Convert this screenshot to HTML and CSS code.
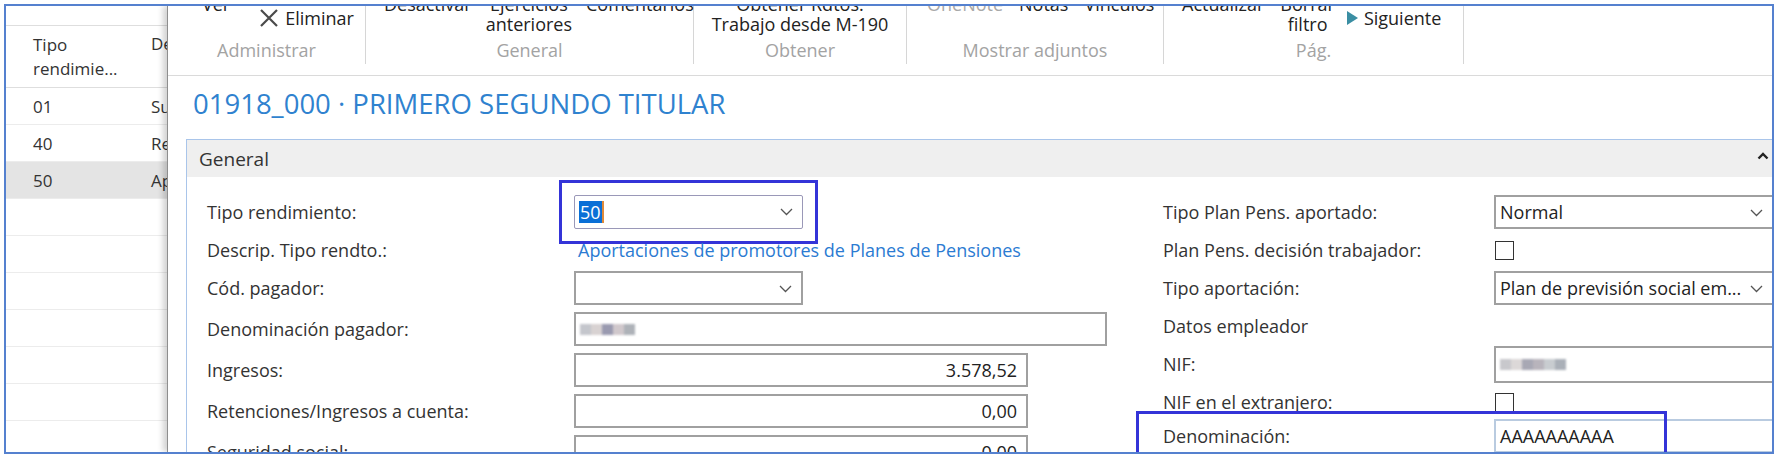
FILE: index.html
```html
<!DOCTYPE html>
<html lang="es">
<head>
    <meta charset="UTF-8">
    <title>01918_000 · PRIMERO SEGUNDO TITULAR</title>
    <link rel="stylesheet" href="styles.css">
</head>
<body>
    <div class="frame">
        <div class="list-panel">
            <div class="list-top"></div>
            <div class="list-head">
                <div class="col-a">Tipo<br>rendimie...</div>
                <div class="col-b">De</div>
            </div>
            <div class="list-row"><div class="col-a">01</div><div class="col-b">Su</div></div>
            <div class="list-row"><div class="col-a">40</div><div class="col-b">Re</div></div>
            <div class="list-row selected"><div class="col-a">50</div><div class="col-b">Ap</div></div>
            <div class="list-row"></div>
            <div class="list-row"></div>
            <div class="list-row"></div>
            <div class="list-row"></div>
            <div class="list-row"></div>
            <div class="list-row"></div>
        </div>

        <div class="dialog">
            <div class="ribbon">
                <div class="group g1">
                    <div class="btns">
                        <div class="item big"><span>Ver</span></div>
                        <div class="item small">
                            <span class="ico">
                                <svg width="22" height="20" viewBox="0 0 22 20"><path d="M3 2 L19 18 M19 2 L3 18" stroke="#4a4a4a" stroke-width="2.2" fill="none"/></svg>
                            </span>
                            <span>Eliminar</span>
                        </div>
                    </div>
                    <div class="glabel">Administrar</div>
                </div>
                <div class="group g2">
                    <div class="btns">
                        <div class="item big"><span>Desactivar</span></div>
                        <div class="item big"><span>Ejercicios</span><span>anteriores</span></div>
                        <div class="item big"><span>Comentarios</span></div>
                    </div>
                    <div class="glabel">General</div>
                </div>
                <div class="group g3">
                    <div class="btns">
                        <div class="item big"><span>Obtener Rdtos.</span><span>Trabajo desde M-190</span></div>
                    </div>
                    <div class="glabel">Obtener</div>
                </div>
                <div class="group g4">
                    <div class="btns">
                        <div class="item big muted"><span>OneNote</span></div>
                        <div class="item big"><span>Notas</span></div>
                        <div class="item big"><span>Vínculos</span></div>
                    </div>
                    <div class="glabel">Mostrar adjuntos</div>
                </div>
                <div class="group g5">
                    <div class="btns">
                        <div class="item big"><span>Actualizar</span></div>
                        <div class="item big"><span>Borrar</span><span>filtro</span></div>
                        <div class="item small">
                            <span class="ico">
                                <svg width="14" height="16" viewBox="0 0 14 16"><polygon points="2,1 13,8 2,15" fill="#3a8ea3"/></svg>
                            </span>
                            <span>Siguiente</span>
                        </div>
                    </div>
                    <div class="glabel">Pág.</div>
                </div>
            </div>

            <h1 class="title">01918_000 · PRIMERO SEGUNDO TITULAR</h1>

            <div class="section">
                <div class="section-head">
                    <span>General</span>
                    <svg class="caret" width="12" height="8" viewBox="0 0 12 8"><polyline points="1.5,6.5 6,2 10.5,6.5" stroke="#222" stroke-width="2.4" fill="none"/></svg>
                </div>
                <div class="section-body">
                    <div class="col left">
                        <div class="row">
                            <div class="label">Tipo rendimiento:</div>
                            <div class="field">
                                <div class="input select narrow focus"><span class="sel">50</span><span class="cursor"></span>
                                    <svg class="chev" width="13" height="8" viewBox="0 0 13 8"><polyline points="1,1 6.5,6.5 12,1" stroke="#555" stroke-width="1.3" fill="none"/></svg>
                                </div>
                                <div class="mark mark-a"></div>
                            </div>
                        </div>
                        <div class="row short">
                            <div class="label">Descrip. Tipo rendto.:</div>
                            <div class="field"><span class="link">Aportaciones de promotores de Planes de Pensiones</span></div>
                        </div>
                        <div class="row">
                            <div class="label">Cód. pagador:</div>
                            <div class="field">
                                <div class="input select narrow">
                                    <svg class="chev" width="13" height="8" viewBox="0 0 13 8"><polyline points="1,1 6.5,6.5 12,1" stroke="#555" stroke-width="1.3" fill="none"/></svg>
                                </div>
                            </div>
                        </div>
                        <div class="row">
                            <div class="label">Denominación pagador:</div>
                            <div class="field">
                                <div class="input wide">
                                    <span class="blur"><i style="background:#c4c6cc"></i><i style="background:#d8d2d2"></i><i style="background:#9a9ab0"></i><i style="background:#d0c8cc"></i><i style="background:#aeb2b8"></i></span>
                                </div>
                            </div>
                        </div>
                        <div class="row">
                            <div class="label">Ingresos:</div>
                            <div class="field"><div class="input num">3.578,52</div></div>
                        </div>
                        <div class="row">
                            <div class="label">Retenciones/Ingresos a cuenta:</div>
                            <div class="field"><div class="input num">0,00</div></div>
                        </div>
                        <div class="row">
                            <div class="label">Seguridad social:</div>
                            <div class="field"><div class="input num">0,00</div></div>
                        </div>
                    </div>

                    <div class="col right">
                        <div class="row">
                            <div class="label">Tipo Plan Pens. aportado:</div>
                            <div class="field">
                                <div class="input select side">Normal
                                    <svg class="chev" width="13" height="8" viewBox="0 0 13 8"><polyline points="1,1 6.5,6.5 12,1" stroke="#555" stroke-width="1.3" fill="none"/></svg>
                                </div>
                            </div>
                        </div>
                        <div class="row short">
                            <div class="label">Plan Pens. decisión trabajador:</div>
                            <div class="field"><div class="check"></div></div>
                        </div>
                        <div class="row">
                            <div class="label">Tipo aportación:</div>
                            <div class="field">
                                <div class="input select side">Plan de previsión social em...
                                    <svg class="chev" width="13" height="8" viewBox="0 0 13 8"><polyline points="1,1 6.5,6.5 12,1" stroke="#555" stroke-width="1.3" fill="none"/></svg>
                                </div>
                            </div>
                        </div>
                        <div class="row short">
                            <div class="label">Datos empleador</div>
                        </div>
                        <div class="row">
                            <div class="label">NIF:</div>
                            <div class="field">
                                <div class="input side tall">
                                    <span class="blur"><i style="background:#c8c8cc"></i><i style="background:#dcd8d8"></i><i style="background:#a8a8b4"></i><i style="background:#b8b4bc"></i><i style="background:#c8ccd0"></i><i style="background:#aab0b8"></i></span>
                                </div>
                            </div>
                        </div>
                        <div class="row short">
                            <div class="label">NIF en el extranjero:</div>
                            <div class="field"><div class="check"></div></div>
                        </div>
                        <div class="row last">
                            <div class="label">Denominación:</div>
                            <div class="field"><div class="input side soft">AAAAAAAAAA</div></div>
                            <div class="mark mark-b"></div>
                        </div>
                    </div>
                </div>
            </div>
        </div>
    </div>
</body>
</html>
```

FILE: styles.css
```css
body {
    margin: 0;
    background: #ffffff;
    font-family: 'Open Sans', 'Noto Sans', sans-serif;
    color: #2b2b2b;
}

.frame {
    box-sizing: border-box;
    width: 1770px;
    height: 450px;
    margin: 4px 0 0 4px;
    border: 2px solid #5581cf;
    overflow: hidden;
    display: flex;
    background: #ffffff;
}

/* list behind the dialog */
.list-panel {
    width: 161px;
    flex: none;
    font-size: 17px;
    color: #333;
}

.list-top {
    height: 19px;
    border-bottom: 1px solid #dedede;
}

.list-head {
    display: flex;
    height: 61px;
    align-items: center;
    border-bottom: 1px solid #dedede;
    line-height: 24px;
}

.list-head .col-b {
    align-self: flex-start;
    margin-top: 6px;
}

.col-a {
    width: 118px;
    padding-left: 27px;
    flex: none;
}

.col-b {
    white-space: nowrap;
}

.list-row {
    display: flex;
    align-items: center;
    height: 36px;
    border-bottom: 1px solid #ececec;
}

.list-row.selected {
    background: #e4e4e4;
}

/* dialog */
.dialog {
    flex: 1;
    min-width: 0;
    border-left: 1px solid #8e8e8e;
    box-shadow: -4px 0 6px rgba(0, 0, 0, 0.18);
    background: #ffffff;
    position: relative;
}

.ribbon {
    display: flex;
    height: 69px;
    border-bottom: 1px solid #dadada;
    font-size: 18px;
}

.group {
    height: 58px;
    display: flex;
    flex-direction: column;
    border-right: 1px solid #d6d6d6;
    box-sizing: border-box;
}

.g1 { width: 198px; }
.g2 { width: 328px; }
.g3 { width: 213px; }
.g4 { width: 257px; }
.g5 { width: 300px; }

.btns {
    height: 34px;
    display: flex;
    align-items: flex-start;
    gap: 14px;
    padding-left: 18px;
}

.g1 .btns { padding-left: 34px; gap: 28px; }
.g3 .btns { justify-content: center; padding-left: 0; }
.g4 .btns { padding-left: 20px; gap: 16px; }
.g5 .btns { gap: 16px; }
.g5 .item.small { margin-left: -6px; }

.item {
    display: flex;
    flex-direction: column;
    align-items: center;
    line-height: 20px;
    white-space: nowrap;
    color: #222;
}

.item.big {
    margin-top: -12px;
}

.item.small {
    flex-direction: row;
    align-items: center;
    gap: 5px;
    margin-top: 2px;
}

.item.muted {
    color: #a8a8a8;
}

.ico {
    display: flex;
}

.glabel {
    text-align: center;
    line-height: 20px;
    color: #a3a3a3;
}

.title {
    margin: 12px 0 0 25px;
    font-size: 27.5px;
    line-height: 32px;
    font-weight: 400;
    color: #2f82cf;
}

.section {
    margin: 19px -12px 0 18px;
    border: 1px solid #a9c5ea;
    border-bottom: none;
}

.section-head {
    height: 37px;
    background: #efefef;
    display: flex;
    align-items: center;
    justify-content: space-between;
    padding: 0 14px 0 12px;
    font-size: 19px;
    color: #333;
}

.caret {
    margin-top: -6px;
}

.section-body {
    display: flex;
    gap: 56px;
    padding: 18px 0 0 20px;
    font-size: 18px;
    color: #333;
}

.col {
    display: flex;
    flex-direction: column;
    gap: 7px;
}

.col.left { width: 900px; }

.row {
    display: flex;
    align-items: center;
    height: 34px;
    position: relative;
}

.row.short {
    height: 28px;
}

.right .row.last {
    margin-top: -4px;
}

.left .label { width: 367px; flex: none; }
.right .label { width: 331px; flex: none; }

.label {
    white-space: nowrap;
}

.field {
    position: relative;
    display: flex;
    align-items: center;
}

.input {
    box-sizing: border-box;
    height: 34px;
    border: 2px solid #a0a0a0;
    background: #fff;
    display: flex;
    align-items: center;
    padding: 0 4px;
    color: #222;
    white-space: nowrap;
    overflow: hidden;
}

.input.narrow { width: 229px; }
.input.wide { width: 533px; }
.input.num { width: 454px; justify-content: flex-end; padding-right: 9px; }
.input.side { width: 280px; }
.input.tall { height: 37px; }
.input.soft { border-color: #b9cbe0; border-right-color: #a0a0a0; }

.input.select {
    position: relative;
    padding-right: 28px;
}

.chev {
    position: absolute;
    right: 9px;
    top: 12px;
}

.input.focus {
    border: 1px solid #9a98b8;
    border-radius: 2px;
}

.sel {
    background: #0a6fd6;
    color: #fff;
    padding: 0 1px;
    line-height: 22px;
}

.cursor {
    width: 2px;
    height: 22px;
    background: #e08a3a;
}

.link {
    color: #2b7bd2;
    padding-left: 4px;
    white-space: nowrap;
}

.check {
    box-sizing: border-box;
    width: 19px;
    height: 19px;
    border: 1.5px solid #333;
    margin-left: 1px;
}

.blur {
    display: flex;
    filter: blur(0.8px);
}

.blur i {
    display: block;
    width: 11px;
    height: 11px;
}

/* annotation boxes drawn over the form */
.mark {
    position: absolute;
    border: 3px solid #3434d8;
    pointer-events: none;
}

.mark-a {
    left: -15px;
    top: -15px;
    right: -15px;
    bottom: -15px;
}

.mark-b {
    left: -27px;
    top: -8px;
    width: 525px;
    height: 42px;
}
```
